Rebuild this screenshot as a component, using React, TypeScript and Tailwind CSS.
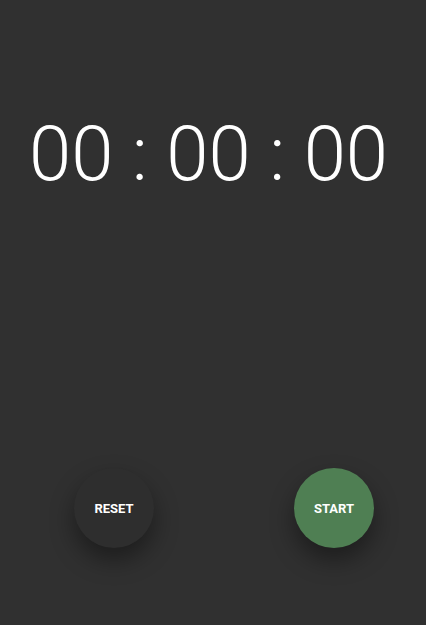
export default function App() {
  return (
    <div
      className="w-[426px] h-[625px] bg-[#303030] flex flex-col items-center"
      style={{ fontFamily: "Roboto, 'Liberation Sans', sans-serif" }}
    >
      <div className="mt-[104px] mr-[9px] text-white text-[76px] font-light leading-none h-[100px] flex items-center whitespace-nowrap">
        00 : 00 : 00
      </div>
      <div className="mt-[264px] w-full flex justify-between pl-[74px] pr-[52px]">
        <button className="w-20 h-20 pt-px rounded-full bg-[#2e2e2e] text-white text-[13px] font-bold shadow-[0_12px_24px_rgba(0,0,0,0.4)]">
          RESET
        </button>
        <button className="w-20 h-20 pt-px rounded-full bg-[#4f7f53] text-white text-[13px] font-bold shadow-[0_12px_24px_rgba(0,0,0,0.4)]">
          START
        </button>
      </div>
    </div>
  );
}
